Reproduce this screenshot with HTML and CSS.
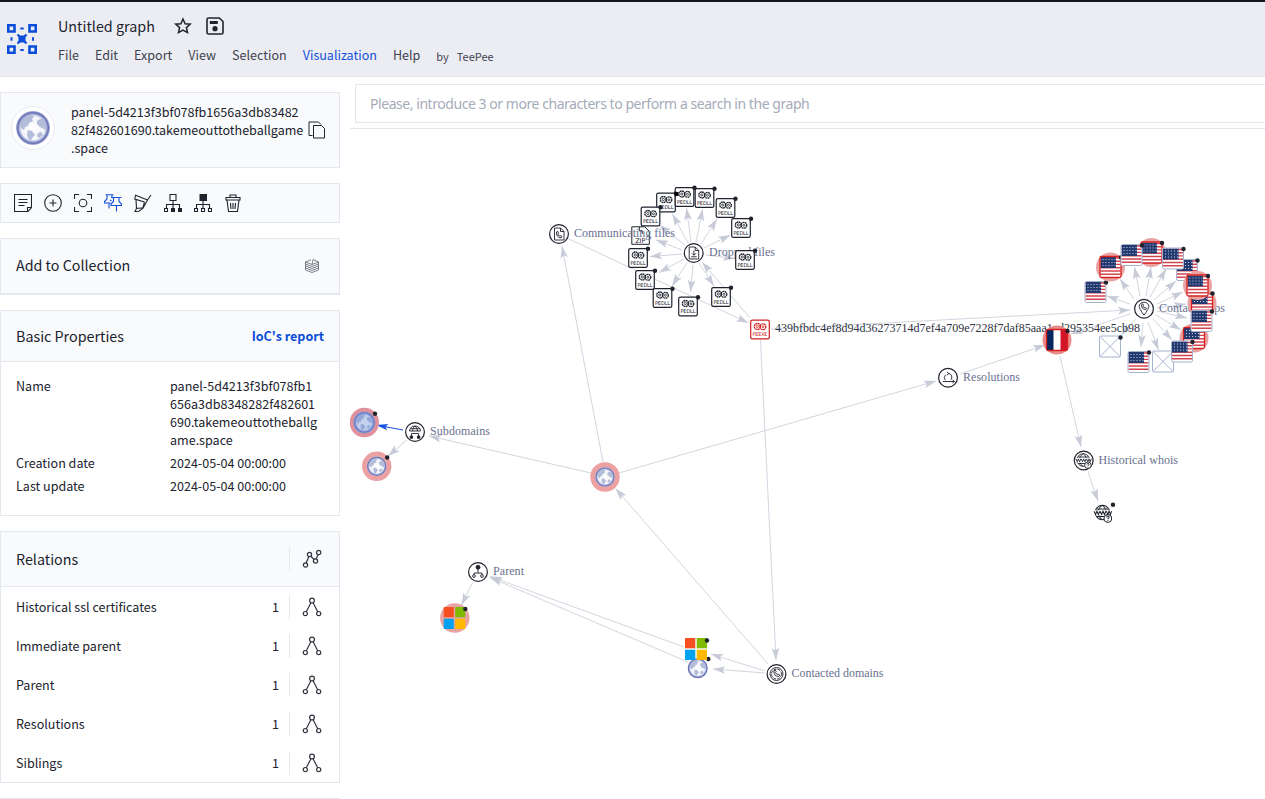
FILE: index.html
```html
<!DOCTYPE html>
<html lang="en">
<head>
<meta charset="utf-8">
<title>Untitled graph</title>
<link rel="stylesheet" href="styles.css">
</head>
<body>
<svg class="defs" width="0" height="0" aria-hidden="true">
  <defs>
    <radialGradient id="sea"><stop offset="0" stop-color="#ffffff"/><stop offset=".7" stop-color="#f1f3fa"/><stop offset=".8" stop-color="#a9b0d8"/><stop offset=".9" stop-color="#646eb3"/><stop offset="1" stop-color="#b5bade"/></radialGradient>
    <symbol id="globe" viewBox="0 0 34 34">
      <circle cx="17" cy="17" r="17" fill="url(#sea)"/>
      <path d="M5 11c2-4 6-6 10-7l3 1-2 3 1 2-4 2-1 3-3 1-1 3-3-2-1-3zM21 10l3-2 4 0 2 5 0 6-4-2-2-1-3-3zM12 19l4 1 3 4-3 3-1 3-3-3-1-4zM22 22l3-1 2 3-4 3-2-2z" fill="#b3bcd9"/>
    </symbol>
    <symbol id="windows" viewBox="0 0 22 22">
      <path fill="#f65020" d="M0 0h10.3v10.3H0z"/><path fill="#7fba00" d="M11.7 0H22v10.3H11.7z"/><path fill="#00a1f1" d="M0 11.7h10.3V22H0z"/><path fill="#ffb900" d="M11.7 11.7H22V22H11.7z"/>
    </symbol>
    <pattern id="stars" width="3" height="3" patternUnits="userSpaceOnUse"><rect width="3" height="3" fill="#223a70"/><rect x="1" y="1" width="1" height="1" fill="#c3cbdf"/></pattern>
    <g id="us">
      <rect x="-10.5" y="-10.5" width="21" height="21" rx="1" fill="#fff"/>
      <path d="M-10-9h20M-10-5.8h20M-10-2.6h20M-10 .8h20M-10 4h20M-10 7.2h20" stroke="#d24450" stroke-width="1.4"/>
      <rect x="-10" y="-10" width="15.500" height="11" fill="url(#stars)"/>
    </g>
    <g id="flag"><use href="#us"/><rect x="-10.5" y="-10.5" width="21" height="21" rx="1.5" fill="none" stroke="#a7b2cf"/><circle cx="10.5" cy="-9.5" r="2.2" fill="#20232e"/></g>
    <g id="flag-bad"><circle r="14.5" fill="#e9a3a3"/><use href="#us"/><rect x="-10.5" y="-10.5" width="21" height="21" rx="1.5" fill="none" stroke="#d8201f" stroke-width="1.3"/><circle cx="10.5" cy="-9.5" r="2.2" fill="#20232e"/></g>
    <g id="noflag"><rect x="-10.5" y="-10.5" width="21" height="21" rx="1.5" fill="#fff" stroke="#a7b2cf"/><path d="M-10-10L10 10M10-10L-10 10" stroke="#a7b2cf"/></g>
    <g id="cogs" fill="none" stroke="currentColor">
      <circle cx="-2.7" cy="-3" r="3" stroke-width="1.3" stroke-dasharray="1.900 .450"/><circle cx="-2.700" cy="-3" r="1.100" stroke-width=".8"/>
      <circle cx="2.900" cy="-2.700" r="2.900" stroke-width="1.300" stroke-dasharray="1.900 .450"/><circle cx="2.900" cy="-2.700" r="1" stroke-width=".8"/>
    </g>
    <g id="file"><rect x="-9.3" y="-9.3" width="18.6" height="18.6" rx="1.6" fill="#fff" stroke="currentColor" stroke-width="1.2"/><use href="#cogs"/></g>
    <g id="dll"><use href="#file"/><text class="kind" y="6.9" textLength="15">PEDLL</text><circle cx="10" cy="-9.3" r="2.2" fill="#20232e"/></g>
    <circle id="hub" r="9.4" fill="#fff" stroke="#20232e" stroke-width="1.2"/>
    <g id="www" fill="none" stroke="#20232e" stroke-width=".9">
      <circle cx="-.5" cy="-.5" r="6.3"/><path d="M-5.500-3.500h10M-5.500 3h7M-.5-6.800c-3 2-3.500 4-3.500 5M-.5-6.800c2.500 2 3 4 3 5M-3.500 2c.500 2 1.500 3 3 4"/>
      <path d="M-8-2.400h15.500v4.200h-15.500z" fill="#fff" stroke="none"/><path d="M-7.800-1.600l1.300 2.800 1.200-2.800 1.200 2.800 1.300-2.800M-2.500-1.600l1.300 2.800 1.200-2.800 1.200 2.800 1.300-2.800M2.900-1.600l1.200 2.800 1.200-2.800 1.200 2.800 1-2.800"/>
      <circle cx="4.200" cy="4.700" r="3.300" fill="#fff"/><path d="M3.200 4q0-1.200 1.100-1.200t1 1q0 .6-1 1.100v.6M4.300 6.200v.7"/>
    </g>
    <marker id="tip" viewBox="-13 -5 14 10" refX="0" refY="0" markerWidth="14" markerHeight="10" markerUnits="userSpaceOnUse" orient="auto"><path d="M0 0L-12-3.800L-9.500 0L-12 3.800z" fill="#c7cbd8"/></marker>
    <marker id="tip-blue" viewBox="-13 -5 14 10" refX="0" refY="0" markerWidth="14" markerHeight="10" markerUnits="userSpaceOnUse" orient="auto"><path d="M0 0L-12-3.200L-9.500 0L-12 3.200z" fill="#1554e0"/></marker>
    <symbol id="branch" viewBox="0 0 20 20"><g fill="none" stroke="#30343f" stroke-width="1.200"><circle cx="10" cy="3.600" r="2.400"/><circle cx="3.300" cy="16.600" r="2.100"/><circle cx="16.700" cy="16.600" r="2.100"/><path d="M8.900 5.800L4.300 14.800M11.100 5.800L15.700 14.800"/></g></symbol>
  </defs>
</svg>

<header class="topbar">
  <svg class="logo" width="30" height="30" viewBox="0 0 30 30"><g fill="none" stroke="#0b4dda" stroke-width="2.600"><path d="M1.300 1.300h6.200v6.200h-6.200zM22.500 1.300h6.200v6.200h-6.200zM1.300 22.500h6.200v6.200h-6.200zM22.500 22.500h6.200v6.200h-6.200z"/><path d="M13.300 4.500h3.400M13.300 26h3.400M4.500 13.300v3.400M26 13.300v3.400" stroke-width="2"/><path d="M10.500 10.500l9 9M19.500 10.500l-9 9" stroke-width="2.200"/></g><path d="M11.500 11.500h7v7h-7z" fill="#0b4dda"/></svg>
  <div class="heading">
    <div class="title-row">
      <span class="title">Untitled graph</span>
      <svg class="star" width="18" height="18" viewBox="0 0 18 18"><path d="M9 2l2.100 4.700 5.100.500-3.800 3.400 1.100 5L9 13l-4.500 2.600 1.100-5L1.800 7.200l5.100-.500z" fill="none" stroke="#20232e" stroke-width="1.500"/></svg>
      <svg class="save" width="18" height="18" viewBox="0 0 18 18"><path d="M2.500 1h10.700L17 4.500v11q0 1.500-1.500 1.500h-13Q1 17 1 15.500v-13Q1 1 2.500 1z" fill="none" stroke="#20232e" stroke-width="1.600"/><path d="M3.800 4h8v3h-8z" fill="#20232e"/><circle cx="9" cy="11.700" r="2.600" fill="#20232e"/></svg>
    </div>
    <nav class="menu"><span>File</span><span>Edit</span><span>Export</span><span>View</span><span>Selection</span><span class="active">Visualization</span><span>Help</span><span class="by">by</span><span class="author">TeePee</span></nav>
  </div>
</header>

<main class="workspace">
  <aside class="sidebar">
    <section class="card entity">
      <div class="avatar"><svg width="34" height="34"><use href="#globe"/></svg></div>
      <div class="entity-name">panel-5d4213f3bf078fb1656a3db83482<br>82f482601690.takemeouttotheballgame<br>.space</div>
      <svg class="copy" width="18" height="18" viewBox="0 0 18 18" fill="none" stroke="#20232e"><path d="M4.500 14.500h-3.500v-13.500h9.500l2.500 2.500"/><path d="M5.500 4.500h8l3 3v9.500h-11z" fill="#f9fafc"/></svg>
    </section>

    <section class="card tools">
      <svg viewBox="0 0 18 18"><path d="M.5.500h17v13l-3.500 4H.5zM17.500 13.500h-4v4M4.500 5.500h9M4.500 8.500h9M4.500 11.500h6"/></svg>
      <svg viewBox="0 0 18 18"><circle cx="9" cy="9" r="8.300"/><path d="M9 5.500v7M5.500 9h7"/></svg>
      <svg viewBox="0 0 18 18"><path d="M.5 5v-4.500h4.500M13 .500h4.500v4.500M17.500 13v4.500h-4.500M5 17.500h-4.500v-4.500"/><circle cx="9" cy="9" r="3.800"/></svg>
      <svg class="pins" viewBox="0 0 18 18"><path d="M1.500.700h8M3 1v4l-2.500 2.500v1.500h6M8 1v2M5 9v5.500M7 3.500h10.500M9.500 4v3.500l-2.500 2.500v1.500h10.500v-1.500l-2.500-2.500v-3.500M12.500 11.500v6M7.500 7l-1.500-1"/></svg>
      <svg viewBox="0 0 18 18"><path d="M1 1l12.500 5M1.500 1.500L.800 5l9.700 3M13.500 6l3.500-5M2 5.500l.500 9-1.500 3 4-.300 4-3 4.500-8.200M10.500 8l-1.500 5.500M2.500 14.200l2.500 0 4-.500"/></svg>
      <svg viewBox="0 0 18 18"><path d="M6 .500h6v6h-6zM9 6.500v4M2.500 14v-3.500h13v3.500M9 10.500v3.500M.5 14.500h3v3h-3z"/><path class="solid" d="M7 14h4v4h-4zM14 14h4v4h-4z"/></svg>
      <svg viewBox="0 0 18 18"><path d="M9 6.500v4M2.500 14v-3.500h13v3.500M9 10.500v3.500M.5 14.500h3v3h-3zM7.500 14.500h3v3h-3zM14.500 14.500h3v3h-3z"/><path class="solid" d="M5.500 0h7.500v7h-7.500z"/></svg>
      <svg viewBox="0 0 18 18"><path d="M6 3V1h6v2M2 3.500h14v2.500h-14zM3 6l1.500 11.500h9L15 6M6.500 9l.500 6M9 9v6M11.500 9l-.500 6"/></svg>
    </section>

    <section class="card collection">
      <h2>Add to Collection</h2>
      <svg width="14" height="14" viewBox="0 0 14 14" fill="none" stroke="#5c606a" stroke-width=".800"><path d="M.5 3L6 .800M8 .500L13.500 3 7 5.500zM.5 3L7 5.500M.5 3v8L7 13.500l6.500-2.500V3M.5 5L7 7.500 13.500 5M.5 7L7 9.500 13.500 7M.5 9L7 11.500l6.500-2.500"/></svg>
    </section>

    <section class="card">
      <div class="card-head basic-head"><h2>Basic Properties</h2><a class="report">IoC's report</a></div>
      <dl class="props">
        <dt>Name</dt><dd>panel-5d4213f3bf078fb1<br>656a3db8348282f482601<br>690.takemeouttotheballg<br>ame.space</dd>
        <dt>Creation date</dt><dd>2024-05-04 00:00:00</dd>
        <dt>Last update</dt><dd>2024-05-04 00:00:00</dd>
      </dl>
    </section>

    <section class="card relations">
      <div class="card-head relation-head"><h2>Relations</h2><span class="expand"><svg width="20" height="20" viewBox="0 0 20 20" fill="none" stroke="#30343f" stroke-width="1.200"><circle cx="3.500" cy="16" r="2.100"/><circle cx="7.500" cy="5.500" r="2.100"/><circle cx="13.500" cy="12" r="2.100"/><circle cx="16.700" cy="3.500" r="2.100"/><path d="M4.200 14L6.800 7.500M8.800 7.200L12.200 10.500M14.200 10L16 5.500"/></svg></span></div>
      <div class="relation"><span class="rel-name">Historical ssl certificates</span><span>1</span><span class="expand"><svg width="20" height="20"><use href="#branch"/></svg></span></div>
      <div class="relation"><span class="rel-name">Immediate parent</span><span>1</span><span class="expand"><svg width="20" height="20"><use href="#branch"/></svg></span></div>
      <div class="relation"><span class="rel-name">Parent</span><span>1</span><span class="expand"><svg width="20" height="20"><use href="#branch"/></svg></span></div>
      <div class="relation"><span class="rel-name">Resolutions</span><span>1</span><span class="expand"><svg width="20" height="20"><use href="#branch"/></svg></span></div>
      <div class="relation"><span class="rel-name">Siblings</span><span>1</span><span class="expand"><svg width="20" height="20"><use href="#branch"/></svg></span></div>
    </section>
    <section class="card next"></section>
  </aside>

  <div class="canvas">
    <div class="search-wrap"><div class="search"><span>Please, introduce 3 or more characters to perform a search in the graph</span></div></div>
    <svg class="graph" width="915" height="670" viewBox="350 129 915 670">
      <g class="edges">
        <path d="M603 462L562 246"/><path d="M569 239L748.500 323"/><path d="M750 318L702 262"/><path d="M771 329L1130 310"/><path d="M760.500 340L776 660"/><path d="M768 664L615.500 488.500"/><path d="M619 473L936 381"/><path d="M960 374L1045 345"/><path d="M1060 356L1081 447"/><path d="M1088 472L1098 501"/><path d="M591 473L429 436"/><path d="M407 440L388 456"/><path d="M472.500 582.500L461.500 605"/><path d="M684 647L490 576.500"/><path d="M688 662L490 577.500"/><path d="M765 671L711 654"/><path d="M765 673L713 669"/>
        <path d="M696 242L702.700 209"/><path d="M691 242L686.500 208"/><path d="M688 243L672.500 214"/><path d="M685 245L659 225"/><path d="M682 250L656 240"/><path d="M682 254L650 256.500"/><path d="M684 259L659 272.500"/><path d="M687 263L672 286"/><path d="M693 265L690.500 292"/><path d="M699 263L714 286"/><path d="M706 255L735 258.500"/><path d="M704 248L730.500 235"/><path d="M701 244L717 219"/>
        <path d="M1130 304L1107 296"/><path d="M1134 299L1120 279"/><path d="M1140 296L1134.500 267"/><path d="M1146 296L1151 267"/><path d="M1150 297L1166 269"/><path d="M1154 300L1176 281"/><path d="M1157 304L1183 292"/><path d="M1157 308L1186 304"/><path d="M1157 311L1187 318"/><path d="M1156 315L1181 330"/><path d="M1153 319L1172 340"/><path d="M1148 322L1158.500 350"/><path d="M1143 323L1141 347"/><path d="M1136 319L1121 335"/><path d="M1130 314L1071 334"/>
        <path class="selected" d="M403 430L376 425"/>
      </g>

      <text class="label" x="709" y="256" textLength="66">Dropped files</text>
      <text class="label" x="1159" y="312" textLength="66">Contacted ips</text>
      <text class="label hash" x="775" y="332" textLength="365">439bfbdc4ef8d94d36273714d7ef4a709e7228f7daf85aaa1cd295354ee5cb98</text>

      <g color="#20232e">
        <g transform="translate(640.300 235.300)"><path d="M-8.500-8.500h13l4.500 4.500v13h-17.500zM-1-8.500v4h3v3" fill="#fff" stroke="#20232e"/><text class="kind zip" y="7.500" textLength="10">ZIP</text></g>
        <use href="#dll" x="666" y="202.500"/><use href="#dll" x="684.500" y="197"/><circle cx="676.500" cy="194" r="2.200"/><use href="#dll" x="704.500" y="198"/><use href="#dll" x="650.500" y="216.500"/><use href="#dll" x="638" y="258"/><use href="#dll" x="645" y="280"/><use href="#dll" x="662.500" y="298"/><use href="#dll" x="688" y="306.500"/><use href="#dll" x="721" y="297"/><use href="#dll" x="745" y="260"/><use href="#dll" x="741" y="228"/><use href="#dll" x="725.500" y="208"/>
      </g>
      <g color="#d02020"><use href="#file" x="760" y="329.500"/><text class="kind danger" x="760" y="336.400" textLength="15">PEEXE</text></g>
      <text class="label" x="574" y="237" textLength="101">Communicating files</text>

      <use href="#flag" x="1095.500" y="292"/><use href="#flag-bad" x="1110.500" y="267"/><use href="#flag-bad" x="1151.500" y="252.500"/><use href="#flag" x="1131.500" y="255"/><use href="#flag" x="1187" y="270"/><use href="#flag" x="1173" y="258.500"/><use href="#flag-bad" x="1202" y="303"/><use href="#flag-bad" x="1197.500" y="285.500"/><use href="#flag-bad" x="1194" y="338"/><use href="#flag" x="1201.500" y="321"/><use href="#flag" x="1138.500" y="362"/><use href="#noflag" x="1163" y="361.500"/><use href="#flag" x="1182" y="351.500"/><use href="#noflag" x="1110" y="346.500"/><circle cx="1120.500" cy="337.500" r="2.200" fill="#20232e"/>
      <g transform="translate(1057 340)"><circle r="14.500" fill="#e98c8c"/><rect x="-10.500" y="-10.500" width="21" height="21" rx="1.500" fill="#fff"/><path d="M-10-10h6.500v20h-6.500z" fill="#06275c"/><path d="M3.500-10h6.500v20h-6.500z" fill="#d21429"/><rect x="-10.500" y="-10.500" width="21" height="21" rx="1.500" fill="none" stroke="#d8201f" stroke-width="1.300"/><circle cx="10.500" cy="-9" r="2.200" fill="#20232e"/></g>

      <g class="glyph">
        <g transform="translate(559 234)"><use href="#hub"/><path d="M-4.500-6h6l3.500 3.500v8.500h-9.500zM1.500-6v3.500h3.500M-2.500-2q-.500 5 4.500 6l1-1.500-2-1-.700.500-1.500-2 .700-1-.800-1.800z"/></g>
        <g transform="translate(693.700 253)"><use href="#hub"/><path d="M-4.500-6h6l3.500 3.500v8.500h-9.500zM1.500-6v3.500h3.500M.2-2.500v4.500M-1.800.300l2 2 2-2M-2.500 3.800h5.500"/></g>
        <g transform="translate(1144 308.700)"><use href="#hub"/><path d="M0 6.500Q-4.800 0-4.800-2.300a4.800 4.200 0 0 1 9.600 0Q4.800 0 0 6.500zM-2.500-4q-.200 4.500 4 5l1-1.300-1.700-1-.700.400-1.200-1.700.600-.800-.700-1.500z"/></g>
        <g transform="translate(948 377.700)"><use href="#hub"/><path d="M-5 3.800h11M4.500 2.300l2 1.500-2 1.500M-2.700 2.500a4 4 0 0 1 .500-5.500M1-4.300a4 4 0 0 1 2 6.300M-1-5.500l2 1.300-2 1.500"/></g>
        <g transform="translate(415 432)"><use href="#hub"/><path d="M-5.500-1a5.500 5 0 0 1 11 0zM-4.800-3.300h9.600M0-6q-2.500 2-2.500 5M0-6q2.500 2 2.500 5M-3.500 4v-2.500h7v2.500"/><path d="M-4.800 4h2.300v2.300h-2.300zM2.500 4h2.300v2.300h-2.300z" fill="#20232e"/></g>
        <g transform="translate(478 572)"><use href="#hub"/><path d="M0-3v4M-4 3v-2h8v2"/><circle cy="-4.800" r="2" fill="#20232e"/><circle cx="-4" cy="4" r="1.400"/><circle cx="4" cy="4" r="1.400"/></g>
        <g transform="translate(776.500 674)"><use href="#hub"/><circle r="6.500"/><circle r="5" stroke-dasharray="3 1"/><path d="M-2.700-3q0 5.500 5 5.500l1-1.500-2-1-.800.500-1.500-1.800.700-1-1-1.700z"/></g>
        <g transform="translate(1083.700 460.500)"><use href="#hub"/><use href="#www"/></g>
        <use href="#www" transform="translate(1103 513) scale(1.150)"/>
      </g>
      <circle cx="1113" cy="504.700" r="2.200" fill="#20232e"/>

      <circle cx="605" cy="477" r="14.700" fill="#eda0a0"/><use href="#globe" x="595" y="467" width="20" height="20"/>
      <circle cx="364.300" cy="422.500" r="14.700" fill="#e0919c"/><use href="#globe" x="353.500" y="411.700" width="21.600" height="21.600"/><circle cx="364.300" cy="422.500" r="11" fill="#5e83d4" opacity=".35"/><circle cx="375" cy="413.800" r="2.200" fill="#20232e"/>
      <circle cx="376.700" cy="466.300" r="14.700" fill="#eba1a1"/><use href="#globe" x="366.700" y="456.300" width="20" height="20"/><circle cx="387.200" cy="457.500" r="2.200" fill="#20232e"/>
      <circle cx="454.800" cy="618" r="14.700" fill="#e9a3a3"/><use href="#windows" x="443.500" y="607" width="22" height="22"/><circle cx="465.300" cy="609" r="2.200" fill="#20232e"/>
      <use href="#globe" x="687.500" y="658" width="20.500" height="20.500"/><circle cx="708.300" cy="659" r="2.200" fill="#20232e"/><use href="#windows" x="685" y="638" width="22" height="22"/><circle cx="707" cy="640.500" r="2.200" fill="#20232e"/>

      <text class="label" x="430" y="435" textLength="60">Subdomains</text>
      <text class="label" x="493" y="575" textLength="31">Parent</text>
      <text class="label" x="963" y="381" textLength="57">Resolutions</text>
      <text class="label" x="1098.500" y="464" textLength="79.500">Historical whois</text>
      <text class="label" x="791.500" y="677" textLength="92">Contacted domains</text>
    </svg>
  </div>
</main>
</body>
</html>
```
FILE: styles.css
```css
* { box-sizing: border-box; }
body { margin: 0; width: 1265px; height: 799px; overflow: hidden; background: #fff; color: #20232e; font: 12.55px/18px "Noto Sans CJK SC", "Open Sans", sans-serif; }
.defs { display: block; position: absolute; }
svg { display: block; flex: none; }

.topbar { display: flex; height: 77px; border-top: 2px solid #15161d; border-bottom: 1px solid #e2e5ec; background: #ecedf3; }
.logo { margin: 22px 21px 0 7px; }
.title-row { display: flex; align-items: center; height: 24px; margin-top: 12px; }
.title { width: 116px; font-size: 14.35px; line-height: 24px; }
.save { margin-left: 14px; }
.menu { display: flex; align-items: center; gap: 16px; margin-top: 6px; line-height: 20px; color: #3d4250; white-space: nowrap; }
.menu .active { color: #1450dc; }
.menu .by, .menu .author { padding-top: 2px; font-size: 11px; }
.menu .author { margin-left: -8px; }

.workspace { display: flex; height: 722px; overflow: hidden; }
.sidebar { display: flex; flex-direction: column; gap: 15px; width: 340px; height: 722px; padding-top: 15px; flex: none; }
.card { flex: none; border: 1px solid #e3e7ef; background: #fff; }
.entity { display: flex; align-items: center; height: 76px; background: #f9fafc; }
.avatar { display: flex; align-items: center; justify-content: center; width: 44px; height: 44px; margin: -4px 16px 0 10px; border: 1px solid #e8ebf1; border-radius: 50%; background: #fff; flex: none; }
.entity-name { width: 237px; white-space: nowrap; }
.tools { display: flex; align-items: center; gap: 12px; height: 40px; padding-left: 13px; background: #f9fafc; }
.tools svg { width: 18px; height: 18px; fill: none; stroke: #20232e; stroke-width: 1.1; }
.tools .pins { stroke: #1450dc; }
.tools .solid { fill: #20232e; stroke: none; }
h2 { margin: 0; font-size: 14.3px; font-weight: 400; line-height: 22px; }
.collection { display: flex; align-items: center; justify-content: space-between; height: 57px; padding: 0 20px 0 15px; border-bottom-width: 2px; background: #f9fafc; }
.collection h2 { padding-bottom: 3px; }
.card-head { display: flex; align-items: center; justify-content: space-between; border-bottom: 1px solid #e3e7ef; padding-left: 15px; background: #f9fafc; }
.basic-head { height: 51px; padding-right: 15px; }
.report { color: #0b4dda; font-weight: 700; }
.props { display: grid; grid-template-columns: 154px 1fr; row-gap: 5px; height: 153px; margin: 0; padding: 15px 0 0 15px; align-content: start; }
.props dd { margin: 0; white-space: nowrap; }
.relations { height: 252px; }
.relation-head { height: 55px; }
.relation { display: flex; align-items: center; height: 39px; padding-left: 15px; }
.rel-name { flex: 1; }
.expand { display: flex; align-items: center; justify-content: center; width: 50px; height: 24px; padding-right: 5px; border-left: 1px solid #e3e7ef; }
.relation .expand { margin-left: 10px; }
.next { height: 1px; border-width: 1px 0 0; }

.canvas { width: 915px; margin-left: 10px; flex: none; }
.search-wrap { height: 52px; padding: 7px 0 0 5px; border-bottom: 1px solid #e4e6eb; }
.search { display: flex; align-items: center; height: 39px; border: 1px solid #e2e6ee; border-right: 0; padding-left: 14px; color: #a5abb8; font: 14px/20px "Noto Sans", sans-serif; letter-spacing: -.45px; white-space: nowrap; }
.graph { overflow: hidden; }
.edges path { fill: none; stroke: #d2d5e0; stroke-width: 1; marker-end: url(#tip); }
.edges .selected { stroke: #1554e0; marker-end: url(#tip-blue); }
.label { fill: #6a7190; font: 12px "Liberation Serif", serif; }
.hash { fill: #30343f; }
.kind { fill: #20232e; font: 400 5px "DejaVu Sans", sans-serif; text-anchor: middle; }
.zip { font-size: 6.5px; }
.danger { fill: #d02020; }
.glyph path, .glyph circle { stroke: #20232e; stroke-width: .9; }
.glyph path { fill: none; }
.glyph circle { fill: none; }
.glyph path[fill="#20232e"], .glyph circle[fill="#20232e"] { fill: #20232e; }
```
